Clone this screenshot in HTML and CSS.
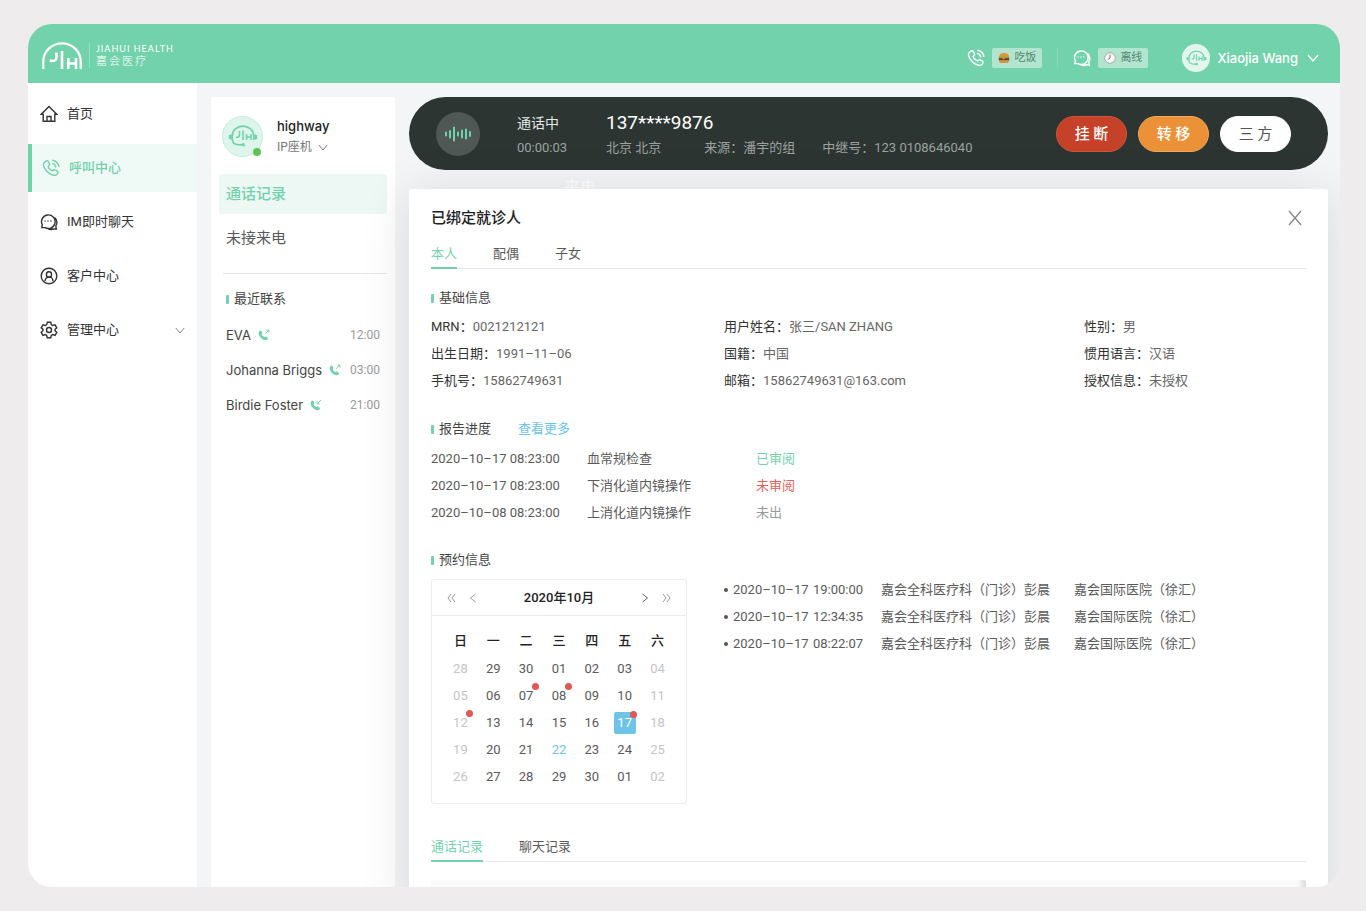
FILE: index.html
```html
<!DOCTYPE html>
<html lang="zh-CN">
<head>
<meta charset="utf-8">
<meta name="viewport" content="width=device-width, initial-scale=1">
<title>嘉会医疗 呼叫中心</title>
<link rel="stylesheet" href="styles.css">
</head>
<body>
<svg class="sprite" aria-hidden="true">
  <symbol id="phone" viewBox="0 0 18 18">
    <path d="M3.2 2.6 4.6 1.8Q5.6 1.5 6.2 2.4L7.5 4.7Q7.9 5.6 7.2 6.3L6.2 7.3Q6.1 8.6 7.6 10.1T10.7 11.9L11.8 11Q12.6 10.4 13.5 11L15.6 12.4Q16.4 13.1 15.9 14L15 15.4Q13.7 17 10.6 16Q7.2 14.9 4.4 11.7Q1.5 8.3 1.4 5.4Q1.5 3.5 3.2 2.6Z"/>
    <path d="M10 4.4Q13.4 5 13.8 8.3M10.3 1.2Q16.2 2 17 7.9"/>
  </symbol>
  <symbol id="chat" viewBox="0 0 18 18">
    <path d="M5 14.6H1.8L2.3 11.8A6.8 6.8 0 1 1 5 14.6ZM14.6 4.6Q17.2 6.6 16.9 10Q16.6 11.8 15.8 12.8L16.3 16H12.6Q9.6 17.2 7 15.2"/>
    <path d="M4.6 8H5.6M7.5 8H8.5M10.4 8H11.4" stroke-width="1.4"/>
  </symbol>
  <symbol id="down" viewBox="0 0 12 8"><path d="M1 1 6 7 11 1"/></symbol>
  <symbol id="agent" viewBox="0 0 30 22">
    <path d="M4.3 16V10.5A10.7 9.4 0 0 1 25.7 10.5V15M4.3 14Q4.5 19.5 10 19.8H14"/>
    <path d="M1.6 10V14M28.4 10V14M3 9.5V14.5M27 9.5V14.5M11.5 6V10Q11.5 12.7 8 12.2M15 5.5V15M18.5 9V15M23 9V15M18.5 12H23"/>
    <circle cx="15.2" cy="19.8" r="1"/>
  </symbol>
  <symbol id="call-out" viewBox="0 0 12 12">
    <path class="solid" d="M1.2 2.2Q2.5 1 3.4 2.1L4.3 3.6Q4.6 4.4 3.7 5.1Q3.9 7.2 6.4 8Q7.2 7 8.1 7.6L9.7 8.7Q10.5 9.6 9.4 10.5Q6.6 12.5 3 9Q-.5 5 1.2 2.2Z"/>
    <path d="M7.2 4.7 10.7 1.3M8.6 1.1H10.9V3.5"/>
  </symbol>
  <symbol id="call-in" viewBox="0 0 12 12">
    <path class="solid" d="M1.2 2.2Q2.5 1 3.4 2.1L4.3 3.6Q4.6 4.4 3.7 5.1Q3.9 7.2 6.4 8Q7.2 7 8.1 7.6L9.7 8.7Q10.5 9.6 9.4 10.5Q6.6 12.5 3 9Q-.5 5 1.2 2.2Z"/>
    <path d="M7.3 4.6 11 1.1M7.1 2.4V4.8H9.5"/>
  </symbol>
</svg>

<div class="app">
  <header class="header">
    <a class="brand" href="#" aria-label="嘉会医疗">
      <svg class="brand-mark" viewBox="0 0 40 28" aria-hidden="true">
        <path d="M1.3 27V19.5A18.7 18.2 0 0 1 38.7 19.5V27" stroke-width="2.2"/>
        <path d="M14.5 10.5V15.5Q14.3 20.3 7.8 18.4M20 9V27M26.3 16V27M34 16V27M26.3 21.5H34" stroke-width="2.6"/>
      </svg>
      <span class="brand-text"><span class="brand-en">JIAHUI HEALTH</span><span class="brand-cn">嘉会医疗</span></span>
    </a>
    <div class="tools">
      <div class="status">
        <svg class="icon light" aria-hidden="true"><use href="#phone"/></svg>
        <button class="chip" type="button">
          <svg class="emoji" viewBox="0 0 12 12" aria-hidden="true"><path d="M1 5Q1 1 6 1T11 5Z" fill="#e3913b"/><path d="M.7 5H11.3V6.4H.7Z" fill="#7cac3e"/><path d="M.8 6.3H11.2V8.5H.8Z" fill="#73351f"/><path d="M1 6.2 4 6.2 5.5 7.5 7 6.2Z" fill="#f5c340"/><path d="M1 8.4H11Q11 11 8.8 11H3.2Q1 11 1 8.4Z" fill="#dd9042"/></svg>
          吃饭
        </button>
      </div>
      <div class="status second">
        <svg class="icon light" aria-hidden="true"><use href="#chat"/></svg>
        <button class="chip" type="button">
          <svg class="emoji" viewBox="0 0 12 12" aria-hidden="true"><circle cx="6" cy="6" r="5.3" fill="#f8f8f8" stroke="#a7a9ad" stroke-width="1"/><path d="M6 2.5V6L3.8 7.5" fill="none" stroke="#555" stroke-width=".8"/></svg>
          离线
        </button>
      </div>
      <button class="account" type="button">
        <span class="account-pic"><svg viewBox="0 0 30 22" aria-hidden="true"><use href="#agent"/></svg></span>
        <span>Xiaojia Wang</span>
        <svg class="chevron" aria-hidden="true"><use href="#down"/></svg>
      </button>
    </div>
  </header>

  <div class="body">
    <nav class="side">
      <a href="#"><svg class="icon" viewBox="0 0 18 18" aria-hidden="true"><path d="M1.2 9.3 9 1.6 16.8 9.3H14.8V16.3H3.2V9.3ZM7 16V11.5H11V16"/></svg>首页</a>
      <a href="#" class="active"><svg class="icon" aria-hidden="true"><use href="#phone"/></svg>呼叫中心</a>
      <a href="#"><svg class="icon" aria-hidden="true"><use href="#chat"/></svg>IM即时聊天</a>
      <a href="#"><svg class="icon" viewBox="0 0 18 18" aria-hidden="true"><circle cx="9" cy="9" r="7.8"/><circle cx="9" cy="7.4" r="2.6"/><path d="M5 14.2Q5.2 10.2 9 10.1T13 14.2"/></svg>客户中心</a>
      <a href="#"><svg class="icon" viewBox="0 0 18 18" aria-hidden="true"><path d="M7.3 1.3H10.7L11.3 3.6 12.8 4.5 15 3.8 16.8 6.8 15.1 8.3V9.9L16.8 11.3 15 14.3 12.8 13.6 11.3 14.5 10.7 16.7H7.3L6.7 14.5 5.2 13.6 3 14.3 1.2 11.3 2.9 9.8V8.2L1.2 6.8 3 3.8 5.2 4.5 6.7 3.6Z"/><circle cx="9" cy="9" r="2.5"/></svg>管理中心<svg class="chevron" aria-hidden="true"><use href="#down"/></svg></a>
    </nav>

    <aside class="contacts">
      <div class="agent">
        <span class="agent-pic"><svg viewBox="0 0 30 22" aria-hidden="true"><use href="#agent"/></svg><i class="online"></i></span>
        <div>
          <div class="agent-name">highway</div>
          <button class="device" type="button">IP座机 <svg class="chevron" aria-hidden="true"><use href="#down"/></svg></button>
        </div>
      </div>
      <div class="logs">
        <a href="#" class="active">通话记录</a>
        <a href="#">未接来电</a>
      </div>
      <h2 class="section-title">最近联系</h2>
      <ul class="recent">
        <li><span>EVA</span><svg class="call" aria-hidden="true"><use href="#call-out"/></svg><time>12:00</time></li>
        <li><span>Johanna Briggs</span><svg class="call" aria-hidden="true"><use href="#call-out"/></svg><time>03:00</time></li>
        <li><span>Birdie Foster</span><svg class="call" aria-hidden="true"><use href="#call-in"/></svg><time>21:00</time></li>
      </ul>
    </aside>

    <main class="main">
      <section class="callbar">
        <span class="wave"><svg viewBox="0 0 28 16" aria-hidden="true"><path d="M2 6.5V9.5M6 5V11.5M10 1.5V14.5M14 6.5V9.5M18 4.5V11.5M22 3.5V12.5M26 6V10"/></svg></span>
        <div class="call-state"><strong>通话中</strong><span>00:00:03</span></div>
        <div class="call-info">
          <strong>137****9876</strong>
          <div class="call-meta"><span>北京 北京</span><span>来源：潘宇的组</span><span>中继号：123 0108646040</span></div>
        </div>
        <div class="call-actions">
          <button type="button" class="hangup">挂 断</button>
          <button type="button" class="transfer">转 移</button>
          <button type="button" class="three">三 方</button>
        </div>
      </section>

      <div class="detail">
        <span class="incoming">来电</span>
        <section class="card">
          <div class="card-head"><h1>已绑定就诊人</h1>
            <button type="button" class="close" aria-label="关闭"><svg viewBox="0 0 14 16" aria-hidden="true"><path d="M1 1 13 15M13 1 1 15"/></svg></button>
          </div>
          <div class="tabs">
            <button type="button" class="active">本人</button><button type="button">配偶</button><button type="button">子女</button>
          </div>

          <h2 class="section-title">基础信息</h2>
          <dl class="facts">
            <div><dt>MRN：</dt><dd>0021212121</dd></div>
            <div><dt>用户姓名：</dt><dd>张三/SAN ZHANG</dd></div>
            <div><dt>性别：</dt><dd>男</dd></div>
            <div><dt>出生日期：</dt><dd>1991–11–06</dd></div>
            <div><dt>国籍：</dt><dd>中国</dd></div>
            <div><dt>惯用语言：</dt><dd>汉语</dd></div>
            <div><dt>手机号：</dt><dd>15862749631</dd></div>
            <div><dt>邮箱：</dt><dd>15862749631@163.com</dd></div>
            <div><dt>授权信息：</dt><dd>未授权</dd></div>
          </dl>

          <div class="title-row"><h2 class="section-title">报告进度</h2><a href="#">查看更多</a></div>
          <table class="reports">
            <tr><td>2020–10–17 08:23:00</td><td>血常规检查</td><td class="done">已审阅</td></tr>
            <tr><td>2020–10–17 08:23:00</td><td>下消化道内镜操作</td><td class="todo">未审阅</td></tr>
            <tr><td>2020–10–08 08:23:00</td><td>上消化道内镜操作</td><td class="none">未出</td></tr>
          </table>

          <h2 class="section-title">预约信息</h2>
          <div class="booking">
            <div class="calendar">
              <div class="cal-head">
                <button type="button" aria-label="上一年"><svg viewBox="0 0 8 8"><path d="M4 0 1 4 4 8M8 0 5 4 8 8"/></svg></button>
                <button type="button" aria-label="上个月"><svg viewBox="0 0 8 8"><path d="M6.5 0 1.5 4 6.5 8"/></svg></button>
                <strong>2020年10月</strong>
                <button type="button" aria-label="下个月" class="dark"><svg viewBox="0 0 8 8"><path d="M1.5 0 6.5 4 1.5 8"/></svg></button>
                <button type="button" aria-label="下一年"><svg viewBox="0 0 8 8"><path d="M0 0 3 4 0 8M4 0 7 4 4 8"/></svg></button>
              </div>
              <table class="days">
                <thead><tr><th>日</th><th>一</th><th>二</th><th>三</th><th>四</th><th>五</th><th>六</th></tr></thead>
                <tbody>
                  <tr><td class="off">28</td><td>29</td><td>30</td><td>01</td><td>02</td><td>03</td><td class="off">04</td></tr>
                  <tr><td class="off">05</td><td>06</td><td><span class="day mark">07</span></td><td><span class="day mark">08</span></td><td>09</td><td>10</td><td class="off">11</td></tr>
                  <tr><td class="off"><span class="day mark">12</span></td><td>13</td><td>14</td><td>15</td><td>16</td><td><span class="day mark picked">17</span></td><td class="off">18</td></tr>
                  <tr><td class="off">19</td><td>20</td><td>21</td><td class="today">22</td><td>23</td><td>24</td><td class="off">25</td></tr>
                  <tr><td class="off">26</td><td>27</td><td>28</td><td>29</td><td>30</td><td>01</td><td class="off">02</td></tr>
                </tbody>
              </table>
            </div>
            <ul class="visits">
              <li><span>2020–10–17</span><span>19:00:00</span><span>嘉会全科医疗科（门诊）彭晨</span><span>嘉会国际医院（徐汇）</span></li>
              <li><span>2020–10–17</span><span>12:34:35</span><span>嘉会全科医疗科（门诊）彭晨</span><span>嘉会国际医院（徐汇）</span></li>
              <li><span>2020–10–17</span><span>08:22:07</span><span>嘉会全科医疗科（门诊）彭晨</span><span>嘉会国际医院（徐汇）</span></li>
            </ul>
          </div>

          <div class="tabs records">
            <button type="button" class="active">通话记录</button><button type="button">聊天记录</button>
          </div>
          <div class="list-head"></div>
        </section>
      </div>
    </main>
  </div>
</div>
</body>
</html>
```
FILE: styles.css
```css
* { box-sizing: border-box; }
body {
  margin: 0;
  padding: 24px 26px 24px 28px;
  height: 100vh;
  background: #eeecec;
  color: #5a5a5a;
  font: 13px/20px Roboto, "Noto Sans CJK SC", sans-serif;
}
h1, h2, ul, dl, dd { margin: 0; padding: 0; }
ul { list-style: none; }
a { color: inherit; text-decoration: none; }
button { margin: 0; padding: 0; border: 0; background: none; color: inherit; font: inherit; white-space: nowrap; cursor: pointer; }
svg { display: block; flex: none; fill: none; stroke: currentColor; }
.sprite { position: absolute; width: 0; height: 0; }
.icon { width: 18px; height: 18px; stroke-width: 1.4; }
.chevron { width: 10px; height: 7px; stroke-width: 1.2; }
.solid { fill: currentColor; stroke: none; }

.app {
  display: flex;
  flex-direction: column;
  height: 100%;
  overflow: hidden;
  border-radius: 24px;
  background: #f4f5f7;
}

/* header */
.header {
  position: relative;
  z-index: 2;
  display: flex;
  flex: none;
  align-items: center;
  justify-content: space-between;
  height: 59px;
  padding: 8px 21px 0 14px;
  background: #72d2ac;
  color: #fff;
}
.brand { display: flex; align-items: center; gap: 7px; padding-bottom: 4px; }
.brand-mark { width: 40px; height: 28px; }
.brand-text { display: flex; flex-direction: column; padding-left: 6px; border-left: 1px solid #94dec1; }
.brand-en { font: 9px/12px Lato, sans-serif; letter-spacing: 1px; }
.brand-cn { font-size: 11px; font-weight: 300; line-height: 13px; letter-spacing: 2px; }
.tools { display: flex; align-items: center; }
.status { display: flex; align-items: center; gap: 7px; }
.second { margin-left: 15px; padding-left: 15px; border-left: 1px solid #87d8b8; }
.chip {
  display: flex;
  align-items: center;
  gap: 4px;
  height: 20px;
  padding: 0 6px;
  border-radius: 2px;
  background: #b2e5d0;
  color: #55866f;
  font-size: 11px;
}
.emoji { width: 12px; height: 12px; stroke: none; }
.account { display: flex; align-items: center; gap: 7px; margin-left: 34px; font: 500 13px/20px Inter, sans-serif; }
.account .chevron { width: 12px; height: 8px; margin-left: 2px; }
.account-pic { display: grid; place-items: center; width: 28px; height: 28px; border-radius: 50%; background: #e2f6ee; color: #72d2ac; }
.account-pic svg { width: 21px; height: 16px; stroke-width: 1.7; }

.body { display: flex; flex: 1; min-height: 0; }

/* side navigation */
.side { display: flex; flex: none; flex-direction: column; gap: 6px; width: 169px; padding-top: 7px; background: #fff; color: #333; }
.side a { display: flex; align-items: center; gap: 9px; height: 48px; padding: 0 12px; }
.side .active { padding-left: 10px; border-left: 4px solid #72d2ac; background: #eff9f6; color: #72d2ac; font-weight: 500; }
.side .chevron { margin-left: auto; color: #888; }

/* contacts */
.contacts { flex: none; width: 184px; margin: 14px 0 0 14px; padding: 18px 8px; border-radius: 3px; background: #fff; }
.agent { display: flex; gap: 14px; align-items: center; padding-left: 3px; }
.agent-pic { position: relative; display: grid; place-items: center; width: 41px; height: 41px; border: 1px solid #c4eddd; border-radius: 50%; background: #ddf5eb; color: #72d2ac; }
.agent-pic svg { width: 30px; height: 22px; stroke-width: 1.6; }
.online { position: absolute; right: 1px; bottom: 0; width: 8px; height: 8px; border-radius: 50%; background: #5fc454; }
.agent-name { color: #222; font: 500 13px/22px Inter, sans-serif; }
.device { display: flex; gap: 6px; align-items: center; color: #777; font-size: 12px; }
.logs {
  margin: 17px 0 15px;
  padding-bottom: 12px;
  background: linear-gradient(#e4e6e7, #e4e6e7) 4px 100% / 165px 1px no-repeat;
  font-size: 15px;
}
.logs a { display: block; height: 40px; margin-bottom: 4px; padding: 0 7px; border-radius: 2px; line-height: 40px; }
.logs .active { background: #edf8f4; color: #72d2ac; font-weight: 500; }
.section-title { display: flex; align-items: center; gap: 5px; color: #444; font-size: 13px; font-weight: 400; line-height: 20px; }
.section-title::before { content: ""; width: 3px; height: 9px; border-radius: 1px; background: #72d2ac; }
.contacts .section-title { padding-left: 7px; }
.recent { margin-top: 8px; padding: 0 7px; }
.recent li { display: flex; align-items: center; height: 35px; color: #444; font: 13px/20px Inter, sans-serif; }
.recent time { margin-left: auto; color: #999; font: 12px/20px Roboto, sans-serif; }
.call { width: 12px; height: 12px; margin-left: 7px; color: #72d2ac; }

/* call bar */
.main { display: flex; flex: 1; flex-direction: column; min-width: 0; padding: 14px 12px 0 14px; }
.callbar { display: flex; flex: none; align-items: center; height: 73px; padding: 0 37px 0 27px; border-radius: 37px; background: #2c3532; color: #9da2a0; }
.wave { display: grid; place-items: center; width: 44px; height: 44px; margin-right: 37px; border-radius: 50%; background: #505855; color: #72d2ac; }
.wave svg { width: 28px; height: 16px; stroke-width: 2; stroke-linecap: round; }
.call-state, .call-info { display: flex; flex-direction: column; gap: 2px; padding-top: 1px; }
.call-state { width: 89px; }
.callbar strong { color: #e4e6e5; font-size: 14px; font-weight: 400; line-height: 26px; }
.callbar .call-info strong { color: #fff; font-size: 19px; }
.call-meta { display: flex; }
.call-meta span { margin-right: 27px; white-space: nowrap; }
.call-meta span:first-child { margin-right: 43px; }
.call-actions { display: flex; gap: 11px; margin-left: auto; font-size: 15px; font-weight: 500; }
.call-actions button { width: 71px; height: 36px; border: 1px solid #fff; border-radius: 18px; background: #fff; color: #fff; }
.call-actions .hangup { border-color: #d2553a; background: #c54128; }
.call-actions .transfer { border-color: #f2a75c; background: #eb9239; }
.call-actions .three { color: #555; font-weight: 400; }

/* patient card */
.detail { position: relative; z-index: 1; flex: 1; min-height: 0; margin-top: 19px; }
.incoming { position: absolute; z-index: -1; top: -12px; left: 155px; color: #fff; font-size: 16px; line-height: 22px; }
.card { min-height: 100%; padding: 16px 22px 0; border-radius: 3px; background: #fff; box-shadow: 0 5px 50px rgba(0, 0, 0, .12); }
.card-head { display: flex; align-items: center; justify-content: space-between; height: 26px; }
.card-head h1 { color: #222; font-size: 15px; font-weight: 500; }
.close { padding: 4px; color: #888; }
.close svg { width: 14px; height: 16px; stroke-width: 1.4; }
.tabs { display: flex; gap: 36px; height: 30px; margin: 8px 0 19px; padding-top: 1px; border-bottom: 1px solid #e7e7e7; }
.tabs button { height: 29px; margin-bottom: -1px; border-bottom: 2px solid transparent; }
.tabs .active { border-color: #72d2ac; color: #72d2ac; }
.facts { display: grid; grid-template-columns: 293fr 360fr 222fr; margin: 5px 0 24px; line-height: 27px; }
.facts div { display: flex; white-space: nowrap; }
.facts dt { color: #333; }
.facts dd { color: #666; }
.title-row { display: flex; gap: 27px; padding-top: 1px; }
.title-row a { color: #6dc4e8; }
.reports { margin: 6px 0 24px; border-spacing: 0; line-height: 27px; }
.reports td { padding: 0; }
.reports td:first-child { width: 156px; }
.reports td:nth-child(2) { width: 169px; }
.reports .done { color: #72d2ac; }
.reports .todo { color: #e45f5c; }
.reports .none { color: #999; }

.booking { display: flex; align-items: flex-start; gap: 37px; margin-top: 9px; }
.calendar { flex: none; width: 256px; height: 225px; border: 1px solid #ececec; border-radius: 3px; }
.cal-head { display: flex; align-items: center; height: 36px; padding: 0 15px; border-bottom: 1px solid #ececec; color: #999; }
.cal-head strong { flex: 1; color: #222; font-weight: 500; text-align: center; }
.cal-head button { padding: 6px 0; }
.cal-head button + button { margin-left: 14px; }
.cal-head .dark { color: #666; }
.cal-head svg { width: 8px; height: 8px; overflow: visible; }
.days { width: 230px; margin: 10px auto 0; border-spacing: 0; table-layout: fixed; line-height: 22px; text-align: center; }
.days th, .days td { height: 27px; padding: 0; font-weight: 400; }
.days th { height: 29px; color: #222; font-weight: 500; }
.days .off { color: #c4c4c4; }
.days .today { color: #6dc4e8; }
.day { position: relative; display: block; width: 22px; height: 22px; margin: 0 auto; border-radius: 2px; }
.mark::after { content: ""; position: absolute; top: -2px; right: -2px; width: 7px; height: 7px; border-radius: 50%; background: #e05754; }
.picked { background: #6dc4e8; color: #fff; }
.picked::after { top: -1px; right: -1px; }
.visits { flex: 1; min-width: 0; margin-top: -3px; line-height: 27px; }
.visits li { display: grid; grid-template-columns: 9px 80px 68px 193px auto; align-items: center; justify-content: start; white-space: nowrap; }
.visits li::before { content: ""; width: 4px; height: 4px; border-radius: 50%; background: #555; }
.records { margin: 28px 0 18px; }
.list-head { height: 40px; border-radius: 3px 3px 0 0; background: linear-gradient(90deg, transparent calc(100% - 8px), #d8d8d8), #fafafa; }
```
